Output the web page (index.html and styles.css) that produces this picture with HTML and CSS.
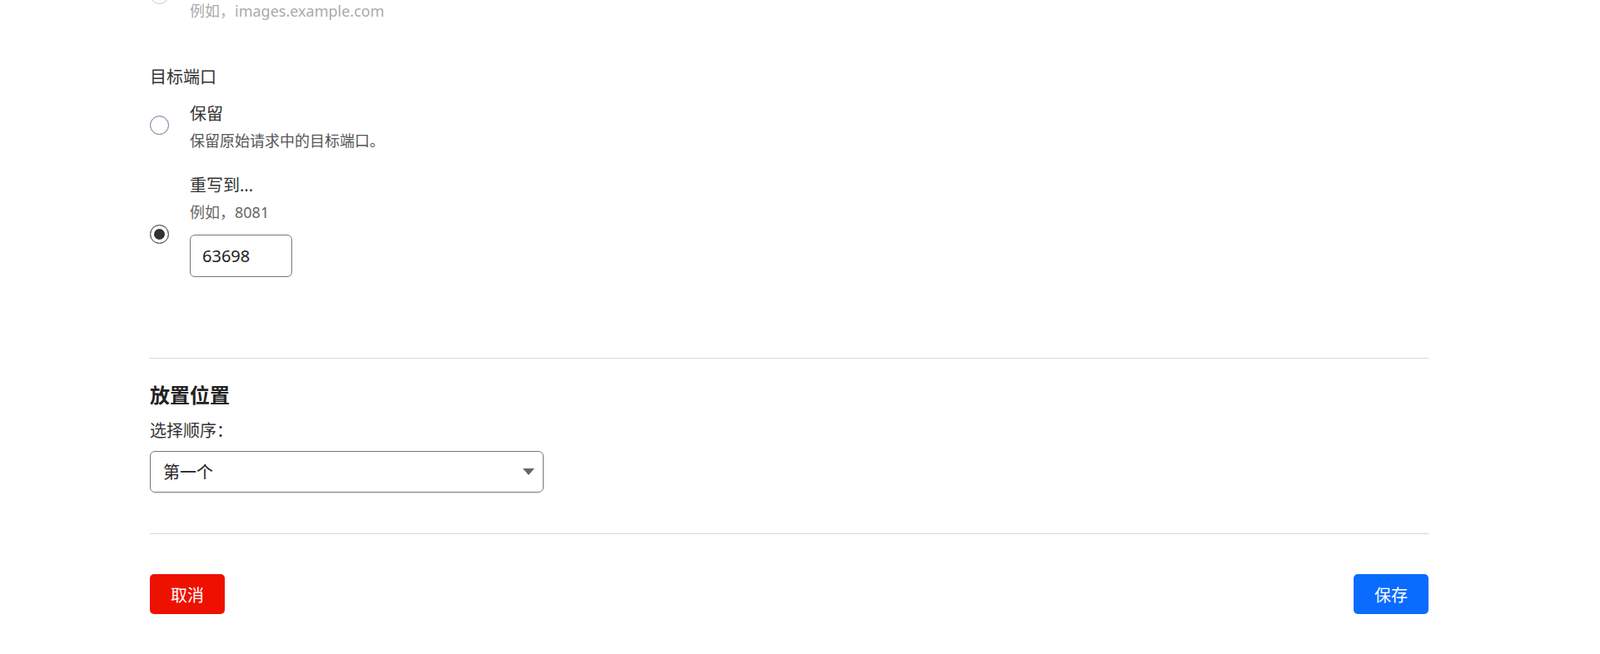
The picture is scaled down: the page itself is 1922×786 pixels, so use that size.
FILE: index.html
```html
<!DOCTYPE html>
<html lang="zh-CN">
<head>
    <meta charset="UTF-8">
    <meta name="viewport" content="width=device-width, initial-scale=1.0">
    <title>端口重写</title>
    <link rel="stylesheet" href="styles.css">
</head>
<body>
    <main class="page">
        <div class="option option-host">
            <input type="radio" class="radio radio-host" name="host">
            <div class="option-text">
                <div class="option-hint muted">例如，images.example.com</div>
            </div>
        </div>

        <section class="field">
            <div class="field-label">目标端口</div>
            <label class="option">
                <input type="radio" class="radio radio-keep" name="port">
                <div class="option-text">
                    <div class="option-title">保留</div>
                    <div class="option-desc">保留原始请求中的目标端口。</div>
                </div>
            </label>
            <label class="option option-rewrite">
                <input type="radio" class="radio radio-rewrite" name="port" checked>
                <div class="option-text">
                    <div class="option-title">重写到...</div>
                    <div class="option-hint">例如，8081</div>
                    <input type="text" class="port-input" value="63698">
                </div>
            </label>
        </section>

        <hr class="divider">

        <section class="placement">
            <h2>放置位置</h2>
            <label class="field-label order-label" for="order">选择顺序：</label>
            <div class="select-wrap">
                <select id="order">
                    <option>第一个</option>
                    <option>最后一个</option>
                </select>
                <svg class="select-arrow" width="14" height="8" viewBox="0 0 14 8"><polygon points="0,0 14,0 7,8" fill="#666"/></svg>
            </div>
        </section>

        <hr class="divider">

        <div class="actions">
            <button class="btn btn-cancel">取消</button>
            <button class="btn btn-save">保存</button>
        </div>
    </main>
</body>
</html>
```

FILE: styles.css
```css
* {
    margin: 0;
    padding: 0;
    box-sizing: border-box;
}
body {
    font-family: "Noto Sans", "Noto Sans CJK SC", sans-serif;
    color: #333;
    background: #fff;
    overflow: hidden;
    height: 100vh;
}
.page {
    padding: 0 206px 0 180px;
}
.option {
    display: flex;
    align-items: flex-start;
    gap: 25px;
}
.option-text {
    display: flex;
    flex-direction: column;
}
.option-title {
    font-size: 20px;
    line-height: 30px;
    color: #333;
}
.option-desc,
.option-hint {
    font-size: 18px;
    line-height: 26px;
    margin-top: 4px;
    color: #555;
}
.option-hint {
    color: #666;
}
.option-hint.muted {
    margin-top: 0;
    color: #aaa;
}
.radio {
    appearance: none;
    -webkit-appearance: none;
    width: 23px;
    height: 23px;
    flex: none;
    border: 1.5px solid #66738f;
    border-radius: 50%;
    background: #fff;
    cursor: pointer;
}
.radio:checked {
    border-color: #5a5a5a;
    background: #333;
    box-shadow: inset 0 0 0 4px #fff;
}
.radio-host {
    margin-top: -18px;
    border-color: #c8c8c8;
}
.radio-keep {
    margin-top: 17px;
}
.radio-rewrite {
    margin-top: 62px;
}
.field {
    margin-top: 52px;
    margin-bottom: 97px;
}
.field-label {
    display: block;
    font-size: 20px;
    line-height: 30px;
    color: #333;
    margin-bottom: 14px;
}
.option-rewrite {
    margin-top: 26px;
}
.port-input {
    margin-top: 14px;
    width: 123px;
    height: 51px;
    border: 1px solid #777;
    border-radius: 6px;
    padding: 0 14px;
    font-family: inherit;
    font-size: 20px;
    color: #222;
    outline: none;
}
.divider {
    border: none;
    height: 1px;
    background-color: #d6d6d6;
}
.placement h2 {
    margin-top: 27px;
    font-size: 24px;
    line-height: 34px;
    font-weight: bold;
    color: #222;
}
.order-label {
    margin-top: 11px;
    margin-bottom: 9px;
}
.select-wrap {
    position: relative;
    width: 473px;
    margin-bottom: 49px;
}
.select-wrap select {
    appearance: none;
    -webkit-appearance: none;
    width: 100%;
    height: 50px;
    border: 1px solid #777;
    border-radius: 6px;
    padding: 0 40px 0 15px;
    background: #fff;
    font-family: inherit;
    font-size: 20px;
    color: #222;
    outline: none;
}
.select-arrow {
    position: absolute;
    right: 11px;
    top: 50%;
    transform: translateY(-50%);
    pointer-events: none;
}
.actions {
    display: flex;
    justify-content: space-between;
    margin-top: 48px;
}
.btn {
    width: 90px;
    height: 48px;
    border: none;
    border-radius: 5px;
    color: #fff;
    font-family: inherit;
    font-size: 20px;
    cursor: pointer;
}
.btn-cancel {
    background-color: #ee1100;
}
.btn-save {
    background-color: #0a6cff;
}
```
